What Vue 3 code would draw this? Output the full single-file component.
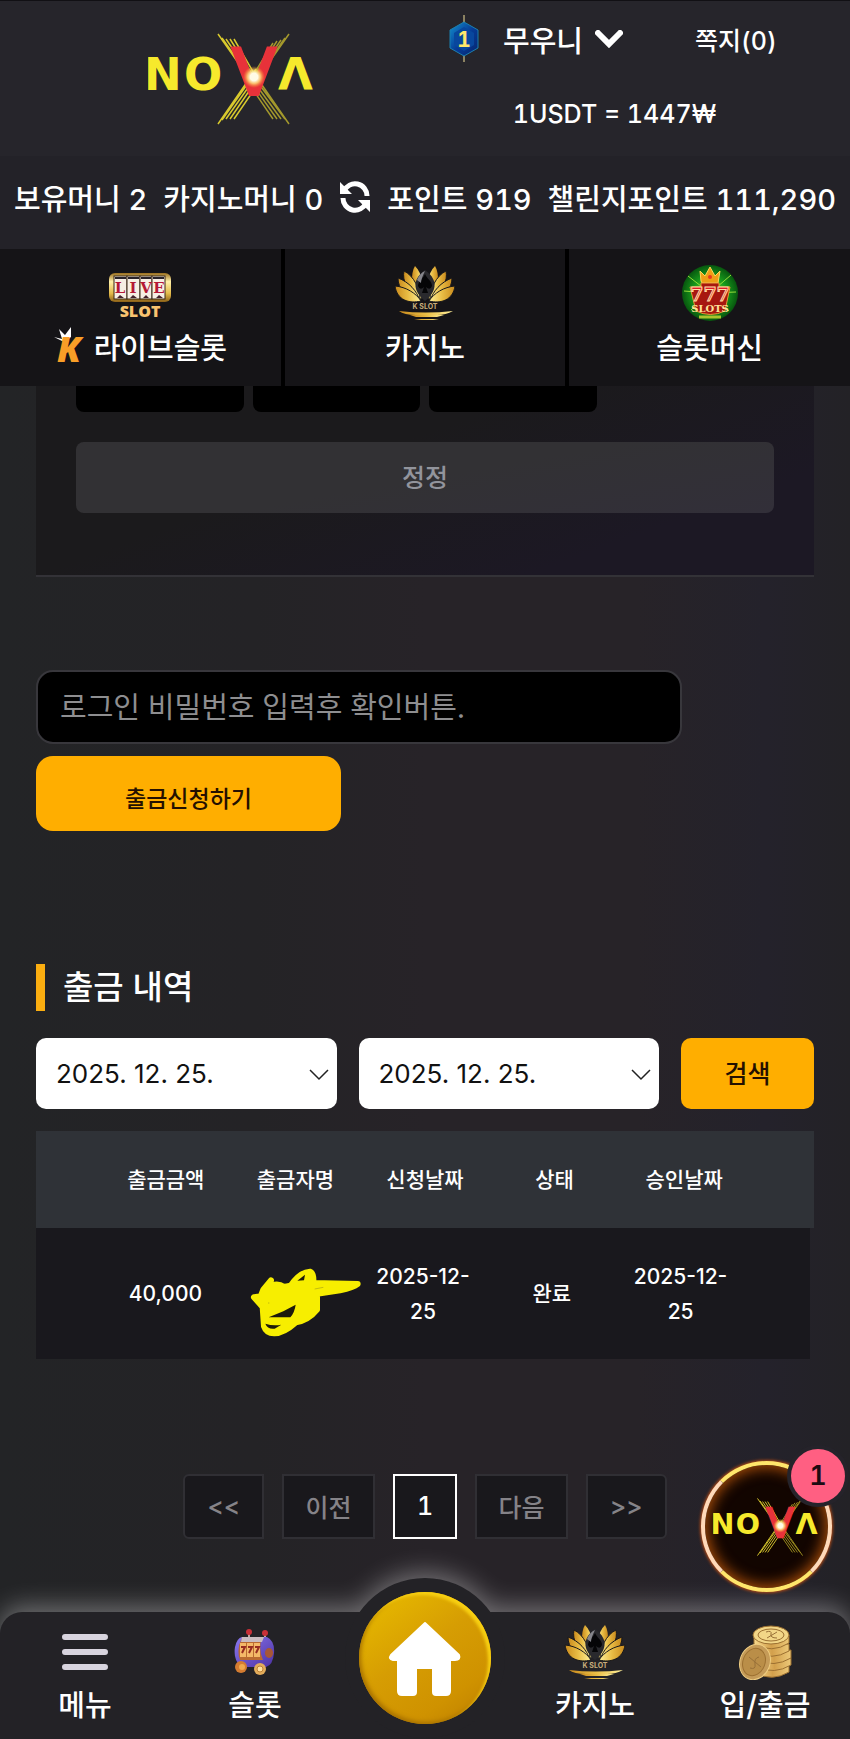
<template>
  <div class="page">
    <svg class="defs" width="0" height="0" aria-hidden="true">
      <defs>
        <linearGradient id="gold" x1="0" y1="0" x2="1" y2="0">
          <stop offset="0" stop-color="#c98a1c" />
          <stop offset="0.5" stop-color="#e9bd45" />
          <stop offset="1" stop-color="#fff09a" />
        </linearGradient>
        <linearGradient id="reel" x1="0" y1="0" x2="0" y2="1">
          <stop offset="0" stop-color="#9a6f1f" />
          <stop offset="0.3" stop-color="#fff0a8" />
          <stop offset="0.7" stop-color="#e3bb4a" />
          <stop offset="1" stop-color="#8c6118" />
        </linearGradient>
        <linearGradient id="coin" x1="0" y1="0" x2="1" y2="0">
          <stop offset="0" stop-color="#f7d98d" />
          <stop offset="0.5" stop-color="#d3a04c" />
          <stop offset="1" stop-color="#ecc878" />
        </linearGradient>
        <radialGradient id="spark">
          <stop offset="0.35" stop-color="#fffbe6" />
          <stop offset="0.6" stop-color="#ffe37c" stop-opacity="0.8" />
          <stop offset="1" stop-color="#ff9a2e" stop-opacity="0" />
        </radialGradient>
        <radialGradient id="green">
          <stop offset="0" stop-color="#8ee02c" />
          <stop offset="0.6" stop-color="#179a1c" />
          <stop offset="1" stop-color="#07560e" />
        </radialGradient>
        <linearGradient id="blue" x1="0" y1="0" x2="1" y2="1">
          <stop offset="0" stop-color="#1391cf" />
          <stop offset="0.5" stop-color="#063c97" />
          <stop offset="1" stop-color="#07256f" />
        </linearGradient>
        <linearGradient id="purple" x1="0" y1="0" x2="1" y2="1">
          <stop offset="0" stop-color="#8b78ef" />
          <stop offset="1" stop-color="#4c31a3" />
        </linearGradient>

        <symbol id="nova" viewBox="0 0 170 92">
          <g stroke="#d8c92d" stroke-width="1.5">
            <path d="M70 1 L110 58 M74 5 L111 57 M78 6 L112 56 M82 6 L113 55 M86 6 L114 54" />
            <path d="M141 1 L101 58 M137 5 L100 57 M133 7 L99 56 M129 8 L99 54 M125 10 L99 52" opacity="0.7" />
            <path d="M70 91 L108 36 M74 87 L108 39 M78 86 L109 42 M82 86 L110 45 M86 86 L112 48" />
            <path d="M141 91 L103 36 M137 86 L102 39 M133 86 L101 42 M129 86 L100 45 M125 86 L99 48" opacity="0.7" />
          </g>
          <g class="word">
            <text x="-4" y="57" font-size="45">N</text>
            <text x="36" y="57" font-size="45">O</text>
            <text x="130" y="57" font-size="45">Λ</text>
            <text class="vee" x="106" y="61" font-size="62">V</text>
          </g>
          <circle cx="106" cy="44" r="11" fill="url(#spark)" />
        </symbol>

        <symbol id="lotus" viewBox="0 0 62 56">
          <g id="petals">
            <path d="M27 34 C17 24 16 9 21 1 C29 9 30 23 27 34Z" fill="url(#gold)" />
            <path d="M26 35 C13 27 8 15 10 6 C20 11 26 24 26 35Z" fill="url(#gold)" stroke="#19181a" />
            <path d="M26 36 C12 32 4 24 4 13 C15 17 23 26 26 36Z" fill="url(#gold)" stroke="#19181a" />
            <path d="M27 36 C15 39 3 35 1 21 C12 22 22 28 27 36Z" fill="url(#gold)" stroke="#19181a" />
          </g>
          <use href="#petals" transform="translate(62 0) scale(-1 1)" />
          <path d="M31 5 C39 11 42 17 40 24 C38 31 31 36 31 36 C31 36 24 31 22 24 C20 17 23 11 31 5Z" fill="#29292d" />
          <path d="M31 9 C33 14 38 16 38 21 Q36 26 32 22 L34 28 H28 L30 22 Q26 26 24 21 C24 16 29 14 31 9Z" fill="#050507" />
          <path d="M23 15 Q26 8 31 6 Q27 14 27 18Z" fill="#85858b" />
          <text x="31" y="44" text-anchor="middle" font-size="7" font-weight="700" fill="#c9ae7c">K SLOT</text>
          <path d="M5 46 Q31 49 59 46 Q52 50 43 50 H22 Q10 50 5 46Z" fill="url(#gold)" />
          <path d="M16 50 H50 L43 52 H22Z M20 54 H45 L39 55 H27Z" fill="url(#gold)" />
        </symbol>
      </defs>
    </svg>

    <header class="top">
      <div class="brand-row">
        <a href="#" class="brand" aria-label="NOVA">
          <svg width="170" height="92"><use href="#nova" /></svg>
        </a>
        <div class="account">
          <div class="account-row">
            <svg width="30" height="48" viewBox="0 0 30 48">
              <path d="M15 0V10M15 38V47" stroke="#8b8262" stroke-width="2" />
              <path d="M15 7 L29 15 V33 L15 41 L1 33 V15Z" fill="url(#blue)" stroke="#1b7fae" />
              <path d="M15 12 L25 18 V30 L15 36 L5 30 V18Z" fill="#08479e" />
              <text x="15" y="32" text-anchor="middle" font-size="21" font-weight="700" fill="#ffe76b">1</text>
            </svg>
            <button class="user" type="button">
              무우니
              <svg width="28" height="18" viewBox="0 0 28 18">
                <path d="M3 3 L14 14 L25 3" fill="none" stroke="#fff" stroke-width="6" stroke-linecap="round" />
              </svg>
            </button>
            <a href="#" class="message">쪽지(0)</a>
          </div>
          <div class="rate">1USDT = 1447₩</div>
        </div>
      </div>

      <div class="balance">
        <span>보유머니 2</span>
        <span>카지노머니 0</span>
        <button type="button" class="refresh" aria-label="새로고침">
          <svg width="32" height="32" viewBox="0 0 32 32">
            <g fill="none" stroke="#fff" stroke-width="5">
              <path d="M5 10 A12 12 0 0 1 28 15" />
              <path d="M27 22 A12 12 0 0 1 4 17" />
            </g>
            <path d="M1 1 V13 H13Z M31 31 V19 H19Z" fill="#fff" />
          </svg>
        </button>
        <span>포인트 919</span>
        <span>챌린지포인트 111,290</span>
      </div>

      <nav class="tabs">
        <a href="#">
          <svg width="64" height="56" viewBox="0 0 64 56">
            <rect x="1" y="8" width="62" height="29" rx="6" fill="url(#reel)" />
            <g fill="#f7efe4" stroke="#392615">
              <rect x="6" y="11" width="13" height="23" /><rect x="19" y="11" width="13" height="23" />
              <rect x="32" y="11" width="12" height="23" /><rect x="44" y="11" width="13" height="23" />
            </g>
            <path d="M7 12H18V14H7Z M20 12H31V14H20Z M33 12H43V14H33Z M45 12H56V14H45Z" fill="#292329" />
            <path d="M9 33L12 30L16 33Z M22 33L25 30L29 33Z M35 33L38 30L41 33Z M48 33L51 30L55 33Z" fill="#41202a" />
            <g class="serif" font-size="15" font-weight="700" fill="#b41836" text-anchor="middle">
              <text x="12" y="28">L</text><text x="25" y="28">I</text>
              <text x="38" y="28">V</text><text x="51" y="28">E</text>
            </g>
            <text x="32" y="52" text-anchor="middle" class="slot-word" font-size="16" font-weight="800" fill="#f8c36f">SLOT</text>
          </svg>
          <span class="tab-label">
            <svg class="k-mark" width="36" height="38" viewBox="0 0 36 38">
              <path d="M0 10 L8 12 L5 2 L11 8 L17 0 L17 10 L10 15 Z" fill="#fff" />
              <text x="3" y="35" class="slot-word" font-size="36" font-weight="800" font-style="italic" fill="#f99e27">K</text>
            </svg>
            라이브슬롯
          </span>
        </a>
        <a href="#">
          <svg width="62" height="56"><use href="#lotus" /></svg>
          <span class="tab-label">카지노</span>
        </a>
        <a href="#">
          <svg width="58" height="58" viewBox="0 0 58 58">
            <circle cx="29" cy="29" r="28" fill="url(#green)" />
            <path d="M29 29L7 12M29 29L3 27M29 29L10 46M29 29L50 11M29 29L55 28M29 29L48 47" stroke="#96dd39" stroke-width="1" />
            <path d="M20 17 L19 7 L24 12 L29 3 L34 12 L39 7 L37 19 H21Z" fill="#ef9e16" stroke="#ffd65c" />
            <circle cx="29" cy="13" r="2" fill="#e8381c" />
            <path d="M9 23 H20 V19 H38 V23 H49 L44 47 Q29 54 15 47Z" fill="#a71710" stroke="#e79a34" />
            <text x="29" y="37" class="serif" font-size="19" font-weight="700" fill="#e01a28" stroke="#ffdba2" stroke-width="1" text-anchor="middle">777</text>
            <text x="29" y="48" text-anchor="middle" class="serif" font-size="10" font-weight="700" fill="#ffe29a">SLOTS</text>
            <path d="M18 53H40" stroke="#a9c32d" stroke-width="3" />
          </svg>
          <span class="tab-label">슬롯머신</span>
        </a>
      </nav>
    </header>

    <main class="content">
      <section class="panel">
        <div class="amounts">
          <button v-for="a in amounts" :key="a" type="button">{{ a }}</button>
        </div>
        <button type="button" class="reset">정정</button>
      </section>

      <form class="withdraw" @submit.prevent>
        <input v-model="password" type="password" placeholder="로그인 비밀번호 입력후 확인버튼." aria-label="로그인 비밀번호" />
        <button type="submit">출금신청하기</button>
      </form>

      <section class="history">
        <h2>출금 내역</h2>
        <form class="filters" @submit.prevent>
          <div v-for="f in filters" :key="f.id" class="select-box">
            <select :id="f.id" v-model="f.value" :aria-label="f.label">
              <option>2025. 12. 25.</option>
            </select>
            <svg width="20" height="12" viewBox="0 0 20 12">
              <path d="M1 1 L10 10 L19 1" fill="none" stroke="#222" stroke-width="1.5" />
            </svg>
          </div>
          <button type="submit">검색</button>
        </form>

        <table>
          <thead>
            <tr>
              <th v-for="h in headers" :key="h">{{ h }}</th>
            </tr>
          </thead>
          <tbody>
            <tr v-for="r in rows" :key="r.id">
              <td>{{ r.amount }}</td>
              <td class="masked">
                <svg width="112" height="70" viewBox="750 980 336 210">
                  <path
                    d="M762 1071 L782 1068 L790 1048 L813 1020 L803 1042 Q830 1024 852 1040 L872 1036 Q900 995 930 994 Q942 998 940 1028 L1073 1031 Q1060 1042 1020 1050 L951 1060 L951 1108 Q925 1140 888 1146 Q850 1180 822 1179 Q799 1179 792 1158 L788 1100Z"
                    fill="#f7ee00" stroke="#f7ee00" stroke-width="18" stroke-linecap="round" stroke-linejoin="round"
                  />
                  <path d="M892 1021 L915 1003 L912 1020Z M806 1131 L850 1113 L887 1093 Q884 1116 871 1131Z M796 1150 Q820 1158 844 1153 L824 1165 Q803 1168 796 1150Z" fill="#1d1a0b" />
                  <path d="M944 1046 L970 1041 M804 1088H808" stroke="#aaa416" stroke-width="2" />
                </svg>
              </td>
              <td>{{ r.requested }}</td>
              <td>{{ r.status }}</td>
              <td>{{ r.approved }}</td>
            </tr>
          </tbody>
        </table>
      </section>

      <div class="pagination">
        <button type="button" disabled>&lt;&lt;</button>
        <button type="button" class="wide" disabled>이전</button>
        <button type="button" class="current">1</button>
        <button type="button" class="wide" disabled>다음</button>
        <button type="button" disabled>&gt;&gt;</button>
      </div>
    </main>

    <footer class="bottom">
      <button type="button" class="chat" aria-label="NOVA 1">
        <svg width="108" height="60"><use href="#nova" /></svg>
        <span class="count">1</span>
      </button>
      <div class="bar-shape"></div>
      <nav class="bar">
        <a href="#">
          <svg width="56" height="56" viewBox="0 0 56 56">
            <path d="M8 13H48M8 28H48M8 43H48" stroke="#d8d4de" stroke-width="6" stroke-linecap="round" />
          </svg>
          <span>메뉴</span>
        </a>
        <a href="#">
          <svg width="44" height="56" viewBox="0 0 44 56">
            <path d="M16 20V9M32 20V10" stroke="#c0a7a0" stroke-width="2" />
            <circle cx="16" cy="8" r="3" fill="#c83038" /><circle cx="32" cy="9" r="3" fill="#c83038" />
            <path d="M9 13 H34 Q42 17 41 29 Q40 41 33 43 H8 Q0 36 2 23 Q4 14 9 13Z" fill="url(#purple)" />
            <path d="M9 14 H29 Q25 25 30 36 H7 Q3 25 9 14Z" fill="#ba6a31" />
            <path d="M9 13 H31 L29 18 H8Z" fill="#c9bcc0" />
            <g fill="#f4b868"><rect x="7" y="19" width="6" height="14" /><rect x="14" y="19" width="6" height="14" /><rect x="21" y="19" width="6" height="14" /></g>
            <path d="M8 23H12L9 29M15 23H19L16 29M22 23H26L23 29" fill="none" stroke="#982c20" stroke-width="2" />
            <ellipse cx="36" cy="29" rx="4" ry="5" fill="#a75735" />
            <circle cx="8" cy="43" r="6" fill="#d47c31" /><circle cx="9" cy="43" r="3" fill="#f0a94e" />
            <circle cx="27" cy="45" r="6" fill="#e3ac5b" /><circle cx="27" cy="45" r="3" fill="#ffe1a0" stroke="#bd8034" />
          </svg>
          <span>슬롯</span>
        </a>
        <a href="#" class="home" aria-label="홈">
          <svg width="74" height="76" viewBox="0 0 74 76">
            <path d="M37 3 L71 35 Q73 40 67 40 H62 V71 Q62 75 58 75 H48 Q45 75 45 72 V48 H28 V72 Q28 75 25 75 H14 Q10 75 10 71 V40 H5 Q0 39 3 35Z" fill="#fff" stroke="#fff" stroke-linejoin="round" stroke-width="2" />
          </svg>
        </a>
        <a href="#">
          <svg width="62" height="56"><use href="#lotus" /></svg>
          <span>카지노</span>
        </a>
        <a href="#">
          <svg width="54" height="56" viewBox="0 0 54 56">
            <g fill="url(#coin)" stroke="#9c7031">
              <path d="M18 43 V49 Q34 58 51 48 V42Z" /><path d="M20 36 V43 Q36 51 53 41 V34Z" />
              <path d="M19 29 V36 Q36 44 53 34 V26Z" /><path d="M17 21 V28 Q34 37 51 27 V20Z" />
              <path d="M16 12 V20 Q34 30 51 19 V11Z" />
              <ellipse cx="33" cy="11" rx="18" ry="9" fill="#f2d687" />
              <ellipse cx="33" cy="11" rx="13" ry="6" fill="none" />
              <ellipse cx="17" cy="38" rx="15" ry="18" transform="rotate(22 17 38)" fill="#c59b58" stroke="#efce83" />
              <ellipse cx="16" cy="38" rx="11" ry="14" transform="rotate(22 16 38)" fill="#ba8e48" />
            </g>
            <path d="M28 8 Q34 6 33 10 T39 14 M29 14L39 8 M12 44 Q18 46 17 40 T21 33 M11 33L23 43" fill="none" stroke="#987038" />
          </svg>
          <span>입/출금</span>
        </a>
      </nav>
    </footer>
  </div>
</template>

<script setup>
import { ref } from 'vue';

const password = ref('');
const amounts = ['100만원', '300만원', '500만원'];
const filters = ref([
  { id: 'from', label: '시작일', value: '2025. 12. 25.' },
  { id: 'to', label: '종료일', value: '2025. 12. 25.' }
]);
const headers = ['출금금액', '출금자명', '신청날짜', '상태', '승인날짜'];
const rows = [
  { id: 1, amount: '40,000', requested: '2025-12-25', status: '완료', approved: '2025-12-25' }
];
</script>

<style>
body { margin: 0; background: #232326; }
</style>

<style scoped>
.page {
  min-height: 100vh;
  display: flex;
  flex-direction: column;
  overflow: hidden;
  color: #fff;
  font-family: Inter, "Noto Sans CJK KR", sans-serif;
  font-weight: 500;
  font-variant-numeric: tabular-nums;
  background: linear-gradient(90deg, #232426 0%, #242326 30%, #272328 50%, #272328 75%, #24222b 90%, #232226 100%);
}
.page * { box-sizing: border-box; }
.defs { position: absolute; }
svg { flex: none; }
a { color: inherit; text-decoration: none; }
button { font: inherit; color: inherit; border: 0; padding: 0; background: none; cursor: pointer; }
.word { font-family: "DejaVu Sans", sans-serif; font-weight: 700; fill: #f6e92c; }
.word .vee { font-weight: 400; fill: #e8323a; stroke: #e8323a; stroke-width: 4px; text-anchor: middle; }
.serif { font-family: "DejaVu Serif", serif; }
.slot-word { font-family: "Open Sans", sans-serif; }

.top { position: relative; z-index: 2; background: #232228; border-top: 1px solid #111014; }
.brand-row { display: grid; grid-template-columns: 1fr 1fr; height: 155px; background: #26252b; }
.brand { display: flex; justify-content: center; padding: 32px 0 0 40px; }
.account { padding: 8px 0 0 24px; }
.account-row { display: flex; align-items: center; height: 60px; }
.user { display: flex; align-items: center; gap: 12px; margin-left: 24px; font-size: 29px; }
.message { margin-left: 72px; font-size: 25px; }
.rate { padding: 27px 70px 0 0; text-align: center; font-size: 25px; line-height: 36px; }
.balance { display: flex; align-items: center; justify-content: space-between; height: 93px; padding: 0 14px 12px; font-size: 29px; white-space: nowrap; }
.refresh { display: flex; }

.tabs { display: grid; grid-template-columns: repeat(3, 1fr); gap: 4px; background: #000; }
.tabs a { display: flex; flex-direction: column; align-items: center; height: 137px; padding-top: 15px; background: #151417; }
.tabs a > svg { height: 58px; }
.tab-label { display: flex; align-items: center; gap: 4px; height: 48px; font-size: 29px; }
.k-mark { overflow: visible; }

.content { display: flex; flex-direction: column; padding: 0 36px; margin-top: -44px; }
.panel { padding: 0 40px 62px; background: linear-gradient(160deg, #1b1a1c 45%, #1c1824 80%); border-bottom: 2px solid #333237; }
.amounts { display: flex; gap: 9px; }
.amounts button { width: 24%; height: 70px; padding-bottom: 9px; border-radius: 8px; background: #000; font-size: 25px; }
.reset { display: block; width: 100%; height: 71px; margin-top: 30px; padding-bottom: 4px; border-radius: 8px; background: linear-gradient(170deg, #323134 50%, #322f39); color: #92949c; font-size: 25px; }

.withdraw { display: flex; flex-direction: column; align-items: flex-start; gap: 12px; margin-top: 93px; }
.withdraw input { width: 83%; height: 74px; padding: 0 22px; border: 2px solid #38373c; border-radius: 17px; background: #000; color: #fff; font: inherit; font-size: 29px; }
.withdraw input::placeholder { color: #8e8e90; font-weight: 400; opacity: 1; }
.withdraw button { width: 305px; height: 75px; padding-top: 6px; border-radius: 17px; background: #ffae00; color: #241000; font-size: 23px; }

.history { margin-top: 133px; }
h2 { margin: 0 0 27px; padding-left: 18px; border-left: 9px solid #fbae10; font-size: 33px; font-weight: 500; line-height: 47px; }
.filters { display: flex; gap: 22px; }
.select-box { position: relative; flex: 1; }
.select-box select { width: 100%; height: 71px; padding: 0 20px; border: 0; border-radius: 10px; appearance: none; background: #fff; color: #111; font: inherit; font-size: 26px; font-weight: 400; font-variant-numeric: normal; }
.select-box svg { position: absolute; right: 8px; top: 31px; pointer-events: none; }
.filters button { width: 133px; height: 71px; padding-bottom: 4px; border-radius: 10px; background: #ffae00; color: #241000; font-size: 25px; }

table { display: block; margin-top: 22px; font-size: 21px; line-height: 35px; }
thead, tbody { display: block; }
tr { display: flex; align-items: center; padding: 0 65px; }
thead tr { height: 97px; background: #2f3237; }
tbody tr { height: 131px; margin-right: 4px; background: #19181d; font-variant-numeric: normal; }
th, td { flex: 1; min-width: 0; padding: 0 10px; font-weight: 500; text-align: center; }
.masked { position: relative; height: 70px; }
.masked svg { position: absolute; left: 20px; top: 8px; }

.pagination { display: flex; justify-content: center; gap: 18px; margin-top: 115px; }
.pagination button { width: 81px; height: 65px; padding-bottom: 2px; border: 2px solid #302f34; background: #19181c; color: #858388; font-size: 25px; }
.pagination .wide { width: 93px; }
.pagination .current { width: 64px; border-color: #fff; color: #fff; }
.pagination button:first-child { border-radius: 6px 0 0 6px; }
.pagination button:last-child { border-radius: 0 6px 6px 0; }

.bottom { position: relative; margin-top: auto; height: 127px; }
.bar-shape { position: absolute; inset: 0; border-radius: 22px 22px 0 0; background: #232226; filter: drop-shadow(0 -6px 12px rgba(255, 255, 255, 0.34)); }
.bar-shape::before { content: ""; position: absolute; left: calc(50% - 80px); top: -34px; width: 160px; height: 160px; border-radius: 50%; background: #232226; }
.bar { position: relative; display: grid; grid-template-columns: repeat(5, 1fr); height: 100%; font-size: 29px; }
.bar a { display: flex; flex-direction: column; align-items: center; padding-top: 12px; }
.bar span { line-height: 52px; }
.bar .home { align-self: start; justify-self: center; justify-content: center; width: 132px; height: 132px; margin-top: -20px; padding: 0; border-radius: 50%; background: linear-gradient(145deg, #e3b300 15%, #d69d03 45%, #cf9200 75%, #bc7e00); box-shadow: inset -3px 3px 3px #f7cf12, inset 2px -2px 4px #a77100; }

.chat { position: absolute; z-index: 3; right: 18px; top: -151px; display: flex; align-items: center; justify-content: center; width: 131px; height: 131px; border: 4px solid #ffe66b; border-left-color: #ffd9b8; border-right-color: #ffd9b8; border-radius: 50%; background: #120500; box-shadow: inset 0 0 14px 3px #a64c08, 0 0 3px 1px #b24b16; }
.count { position: absolute; right: -17px; top: -16px; width: 54px; height: 54px; border-radius: 50%; background: #ff5f82; box-shadow: 0 0 0 4px #25232a; color: #1c0b13; font-size: 27px; font-weight: 600; line-height: 54px; }
</style>
